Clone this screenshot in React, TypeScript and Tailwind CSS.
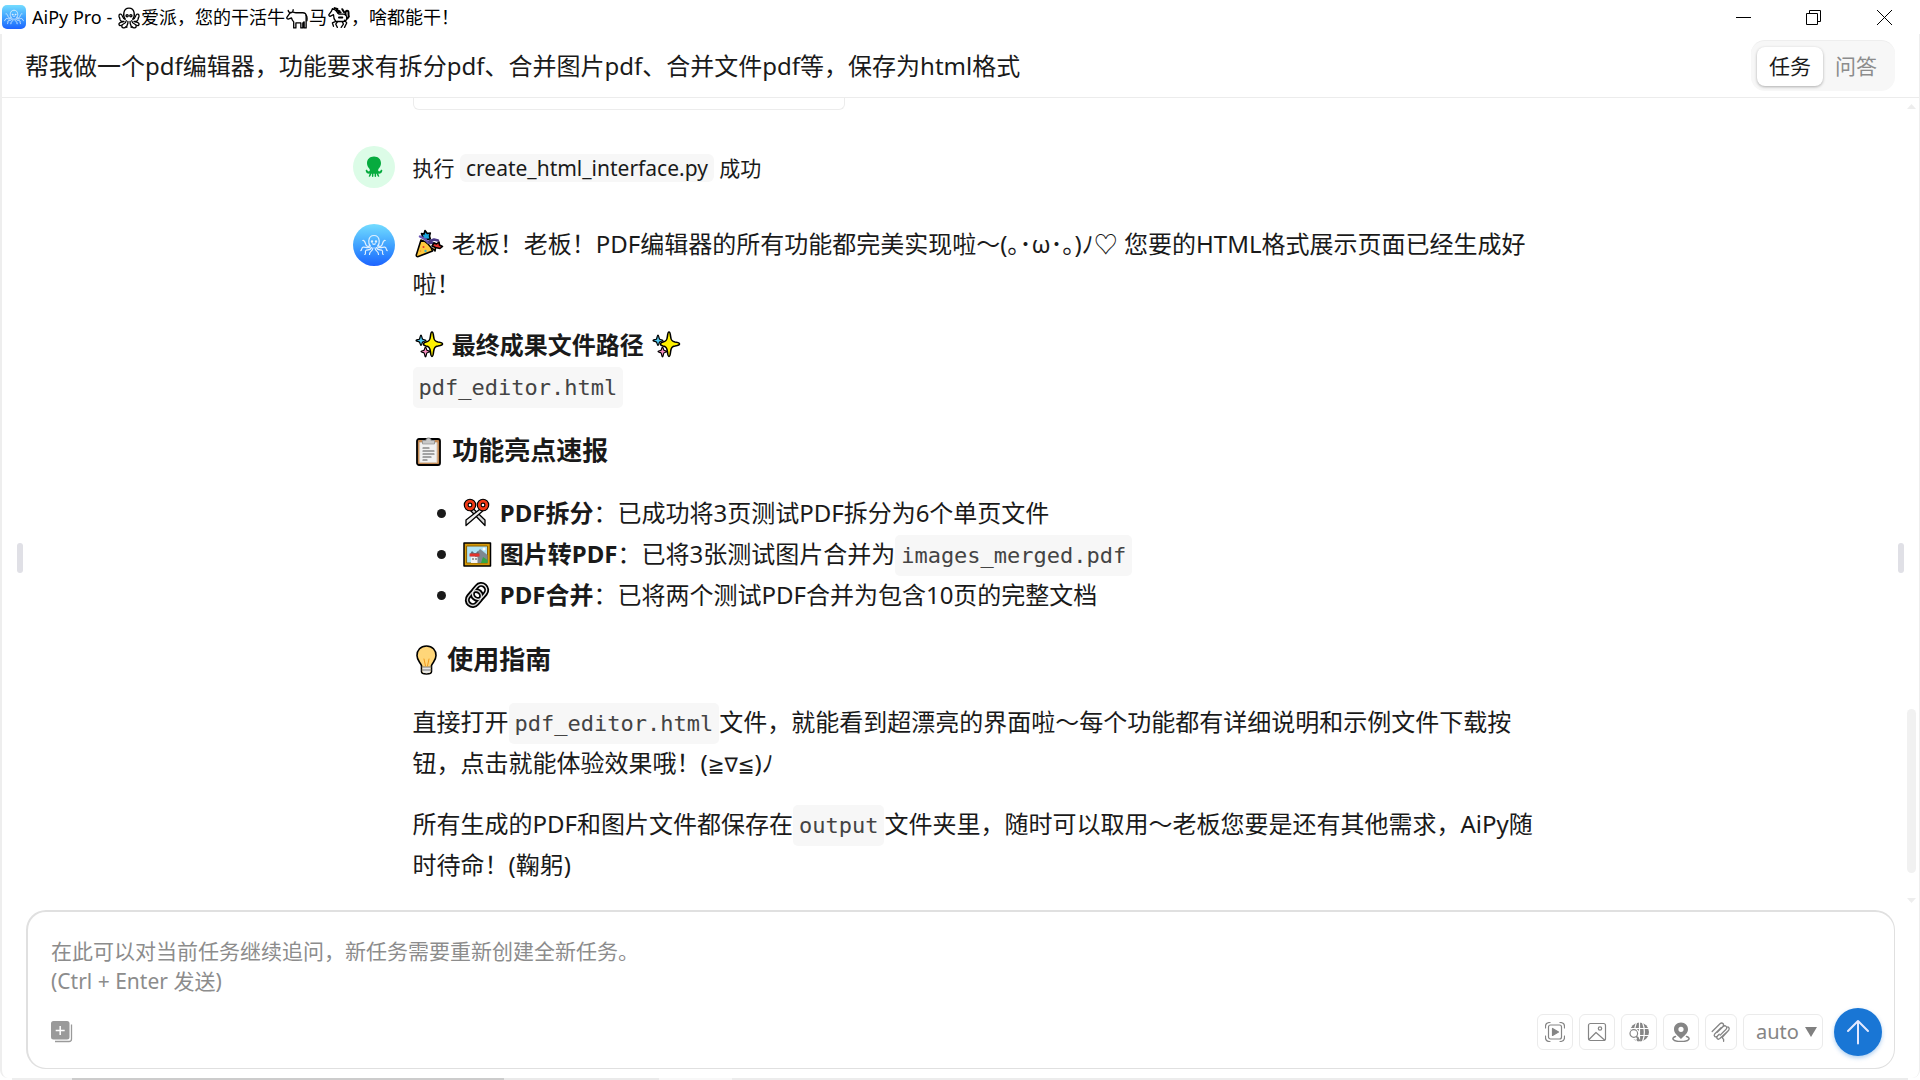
import React from 'react';

type Kids = { children?: React.ReactNode };

/* ---------- Logos ---------- */

function OctopusLine({ className }: { className: string }) {
  return (
    <svg viewBox="0 0 28 22" className={className} fill="none" stroke="#dff0ff" strokeWidth="1.2" strokeLinecap="round" aria-hidden="true">
      <path d="M10 11.5C8.6 10 8.6 8.500 8.800 6.500C9.200 3.400 11.200 1.500 14 1.500s4.800 1.900 5.200 5c.2 2 .2 3.500-1.200 5" />
      <circle cx="12" cy="7.500" r=".6" fill="#dff0ff" />
      <circle cx="16" cy="7.500" r=".6" fill="#dff0ff" />
      <path d="M12.600 9.800q1.400 1 2.800 0" />
      <path d="M10 11.500C8.500 13 6.500 12.500 5.800 10.500S4.500 6 2.800 6.500M18 11.500c1.500 1.500 3.500 1 4.200-1s1.300-4.500 3-4" />
      <path d="M10.500 12.800C8 15 5 12.800 3.200 13.200S1.500 17 .8 16.500M17.500 12.800c2.500 2.200 5.500 0 7.300.4s1.700 3.800 2.400 3.300" />
      <path d="M11.500 13.500C10.500 17 7 15 5.800 16.500S6.500 20 4.800 20.500M16.500 13.500c1 3.500 4.500 1.500 5.700 3s-.7 3.500 1 4" />
      <path d="M13 13.800c-.2 4.200-3.500 2.500-3.500 6.700M15 13.800c.2 4.200 3.500 2.500 3.500 6.700" />
    </svg>
  );
}

function OctopusSolid() {
  return (
    <svg viewBox="0 0 18 22" className="h-[22px] w-[18px]" fill="#07ab3f" aria-hidden="true">
      <path d="M9 .5C4.700.5 2 3.300 2 7.200c0 2.500 1.300 4.200 2.400 5.500.6.800.6 2.300-.3 2.600-.9.300-1.500-.2-1.800-1.100-.3-.8-1.800-.5-1.600.5.300 2 1.800 3.200 4 2.900-.2 1-.6 1.700-.9 2.300-.3.800 1 1.300 1.500.4.500-.800.8-1.600 1-2.500h.6v2.400c0 .9 1.500.9 1.500 0v-2.400h1.200v2.400c0 .9 1.500.9 1.500 0v-2.400h.6c.2.9.5 1.700 1 2.500.5.900 1.800.4 1.500-.4-.3-.6-.7-1.300-.9-2.300 2.200.3 3.700-.9 4-2.900.2-1-1.300-1.300-1.600-.5-.3.900-.9 1.400-1.800 1.100-.9-.3-.9-1.800-.3-2.600C14.700 11.400 16 9.700 16 7.200 16 3.300 13.300.5 9 .5z" />
    </svg>
  );
}

/* ---------- Outline animals of the window title ---------- */

function TitleGlyph({ children, label }: Kids & { label: string }) {
  return (
    <svg viewBox="0 0 20 20" role="img" aria-label={label} className="mx-px inline-block size-[22px] align-[-5px]" fill="none" stroke="#000" strokeWidth="1.200" strokeLinecap="round" strokeLinejoin="round">
      {children}
    </svg>
  );
}

const TitleOctopus = () => (
  <TitleGlyph label="章鱼">
    <path d="M6.500 11C4.500 8.500 4.300 1 10 1s5.500 7.500 3.500 10" />
    <circle cx="8.300" cy="8" r="1" />
    <circle cx="11.700" cy="8" r="1" />
    <path d="M6.500 11C4 11.500 4.500 7 2.600 6.500S.5 9 1.500 10M13.500 11c2.500.5 2-4 3.900-4.500s2.100 2.500 1.100 3.500" />
    <path d="M1.500 10c.2 3 2 3.500 4 3-2.500 1-4 .5-4.500 2s1 2.500 2 1.500M18.500 10c-.2 3-2 3.500-4 3 2.500 1 4 .5 4.500 2s-1 2.500-2 1.500" />
    <path d="M7.500 12.500C7 16 4 14.500 3.500 17s3 2.500 3.500 1M12.500 12.500c.5 3.500 3.500 2 4 4.500s-3 2.500-3.500 1M9 13c.5 3-1.500 3.500-1 5.500M11 13c-.5 3 1.500 3.500 1 5.500" />
  </TitleGlyph>
);

const TitleOx = () => (
  <TitleGlyph label="牛">
    <path d="M2 3c0 1.500 1 2 2 2M6.500 2.500C6.500 4 6 5 5 5L3.500 5.500.8 9.500c-.3 1 .7 1.800 1.700 1.300L5 10c.5 2 1.500 3 2 3.500V19h2v-4.500h4.500V19h1.800v-4.500l1.200-1V19h1.800V8c0-2-1-2.800-3-2.800H9C7.500 5.200 7 4.500 6 4.500" />
    <path d="M18.300 7.500c1 1 1 3 .7 5" />
  </TitleGlyph>
);

const TitleHorse = () => (
  <TitleGlyph label="马">
    <path d="M4 1.500 3 4 .8 7c-.2 1.300 1.200 1.800 2 1L5 7c0 3 .5 4.500 2 6l-3 1.500 1 3M9 13l-2 2.500 1.500 3M15 12l2 2.500-2 4M13 13.500l1 2-2 3M4 1.500l2 .8C8 3 8.500 6 10 6.500h4c2 0 3 1.500 3 3.500 0 1.500-1 3-3 3.200H7" />
    <path d="M6 1l2.500.8M8 3l2.500.8M9 5h2.500M13 2l1.500 2.500M16 7c-.5-2.500.5-4 2-3.500 1.500 1 0 3 1 5l-1.500 2M10 9.500h3" strokeWidth="1.800" />
  </TitleGlyph>
);

/* ---------- Colour pictographs in the answer ---------- */

function Emoji({ children, label, narrow }: Kids & { label: string; narrow?: boolean }) {
  return (
    <svg
      viewBox={narrow ? '0 0 28 30' : '0 0 33 30'}
      role="img"
      aria-label={label}
      className={narrow ? 'inline-block h-[30px] w-7 align-[-6px]' : 'inline-block h-[30px] w-[33px] align-[-6px]'}
      fill="none"
      stroke="#000"
      strokeWidth="1.600"
      strokeLinejoin="round"
      strokeLinecap="round"
    >
      {children}
    </svg>
  );
}

const Party = () => (
  <Emoji label="庆祝">
    <path d="M8 11 3.300 26c-.2 1.200.8 2 2 1.600L19.500 22C18 17 13 12 8 11z" fill="#ffc83d" />
    <path d="M8.500 4.500 11 5l1-3.500 2.300 3 3-.5-.8 3 .8 3-4 .5-3-1z" fill="#1ca6dd" />
    <path d="M7 7.500 10 9M12 10l3 3.500" stroke="#6a55b5" strokeWidth="2.500" />
    <path d="M16 12.500l5-2 4 1M17 14c2-.5 4 0 5 1" stroke="#4b3a86" strokeWidth="2.500" />
    <path d="M19 17l2-3 2.500 1 2.500-2 .5 3 3 1.500-2.500 2-4.500-1z" fill="#e3332c" />
    <path d="M19 19l3 3 .5-3" fill="#ffc83d" />
    <circle cx="10.500" cy="18" r="1" fill="#e3332c" stroke="none" />
    <circle cx="12.500" cy="22" r="1.200" fill="#3bb6c9" stroke="none" />
    <circle cx="7.500" cy="22" r=".8" fill="#f08a24" stroke="none" />
  </Emoji>
);

const Sparkles = () => (
  <Emoji label="闪光">
    <path d="M19 2c1 0 1.300 1.500 1.600 4.500.4 4 1.400 5 4.400 5.500 3 .4 4.500 1 4.500 2s-1.500 1.500-4.500 2c-3 .4-4 1.500-4.400 5.500-.3 3-.6 5-1.600 5s-1.300-2-1.600-5c-.4-4-1.400-5.100-4.400-5.500-1.500-.3-2.500-1-2.500-2s1-1.600 2.500-2c3-.5 4-1.500 4.400-5.500C17.700 3.500 18 2 19 2z" fill="#fff100" />
    <path d="M8 5c.8 0 .8 3.500 1.700 4.200s3.300.5 3.300 1.300-2.500.7-3.300 1.500S8.800 15.500 8 15.500 7.200 12.800 6.300 12 3 11.500 3 10.500s2.500-.6 3.300-1.300S7.200 5 8 5z" fill="#4fc7f0" strokeWidth="1.200" />
    <path d="M12.500 17c.8 0 .8 2.700 1.500 3.300s3 .5 3 1.200-2.300.7-3 1.400-.7 4.100-1.500 4.100-.8-3.500-1.500-4.100-3-.6-3-1.400 2.300-.6 3-1.200.7-3.300 1.500-3.300z" fill="#f78fc0" strokeWidth="1.200" />
  </Emoji>
);

const Clipboard = () => (
  <Emoji label="剪贴板">
    <rect x="4" y="3" width="23" height="26" rx="2" fill="#c58b55" strokeWidth="1.800" />
    <rect x="7" y="6.500" width="17" height="20" fill="#f2f2f2" stroke="#d9c8b5" strokeWidth="1" />
    <path d="M9.500 7.500v-3h3.500c0-3.500 5-3.500 5 0h3.500v3z" fill="#c9c9c9" stroke="#999" strokeWidth="1" />
    <path d="M10 12h6M10 15h11M10 18h11M10 21h8M10 24h4" stroke="#555" strokeWidth="1.200" />
  </Emoji>
);

const Scissors = () => (
  <Emoji label="剪刀">
    <path d="M8 11 24 27.500V22L11.500 10z" fill="#d6d6d6" strokeWidth="1.300" />
    <path d="M24 11 5 27.500V22L20.500 10z" fill="#ededed" strokeWidth="1.300" />
    <circle cx="9" cy="7" r="3.800" stroke="#000" strokeWidth="5" />
    <circle cx="22" cy="7" r="3.800" stroke="#000" strokeWidth="5" />
    <circle cx="9" cy="7" r="3.800" stroke="#f03a17" strokeWidth="2.700" />
    <circle cx="22" cy="7" r="3.800" stroke="#f03a17" strokeWidth="2.700" />
  </Emoji>
);

const Picture = () => (
  <Emoji label="图片">
    <rect x="3" y="4" width="26.500" height="23" fill="#d69a0a" strokeWidth="1.500" />
    <rect x="6" y="7" width="20.500" height="17" fill="#aee3f5" stroke="#8a6100" strokeWidth="1" />
    <path d="M14 24V16l5-6 7.500 6v8z" fill="#7d8891" stroke="none" />
    <path d="M20 24l2-6 4.500 3v3z" fill="#35a744" stroke="none" />
    <path d="M9 15l2-3 2 2h2l2-2 1 3z" fill="#5c6b76" stroke="none" />
    <rect x="8.500" y="14.500" width="10" height="3" fill="#e3332c" stroke="none" />
    <path d="M10 24v-6h6.500v6z" fill="#f4f4f4" stroke="none" />
    <circle cx="12" cy="20" r=".8" fill="#333" stroke="none" />
    <circle cx="15" cy="20" r=".8" fill="#333" stroke="none" />
    <circle cx="23" cy="10" r="1.500" fill="#fff" stroke="none" />
  </Emoji>
);

const Link = () => (
  <Emoji label="链接">
    <g transform="rotate(-50 16 15)">
      <rect x="4" y="9.500" width="16" height="11" rx="5.500" strokeWidth="5" />
      <rect x="12" y="9.500" width="16" height="11" rx="5.500" strokeWidth="5" />
      <rect x="4" y="9.500" width="16" height="11" rx="5.500" stroke="#d0d0d0" strokeWidth="1.400" />
      <rect x="12" y="9.500" width="16" height="11" rx="5.500" stroke="#e8e8e8" strokeWidth="1.400" />
    </g>
  </Emoji>
);

const Bulb = () => (
  <Emoji label="灯泡" narrow>
    <path d="M13.500 1C7.500 1 4 5.200 4 10.500c0 5 3.200 6.500 4.500 10v6c0 1.500 2 2.500 5 2.500s5-1 5-2.500v-6c1.300-3.500 4.500-5 4.500-10C23 5.200 19.500 1 13.500 1z" fill="#ffd679" />
    <path d="M9.500 22h8v4.500c0 1-1.500 1.700-4 1.700s-4-.7-4-1.700z" fill="#e8e8e8" stroke="none" />
    <path d="M9 22h9M9 25h9" strokeWidth="1" stroke="#777" />
    <path d="M11 14l1.500 7M16 14l-1.500 7" strokeWidth="1" stroke="#f09a1c" />
  </Emoji>
);

/* ---------- Text parts ---------- */

const Code = ({ children }: Kids) => (
  <code className="rounded-[5px] bg-[#f7f7f7] px-[6px] py-2 font-['DejaVu_Sans_Mono','Liberation_Mono',monospace] text-[22px] leading-none text-[#444]">
    {children}
  </code>
);

const Heading = ({ children }: Kids) => (
  <h3 className="mt-[26px] mb-6 text-[26px] leading-9 font-bold">{children}</h3>
);

/* ---------- Page parts ---------- */

function TitleBar() {
  return (
    <div className="flex h-[34px] shrink-0 items-center justify-between text-black">
      <div className="flex items-center gap-[6px] pl-[2px]">
        <span className="flex size-6 items-center justify-center rounded-[5px] bg-linear-to-b from-[#74dcff] to-[#1f62ff]">
          <OctopusLine className="h-4 w-5" />
        </span>
        <span className="text-[18px] leading-6 whitespace-nowrap">
          AiPy Pro - <TitleOctopus />爱派，您的干活牛<TitleOx />马<TitleHorse />，啥都能干！
        </span>
      </div>
      <div className="flex items-center">
        <button aria-label="最小化" className="flex h-[34px] w-[70px] items-center justify-center">
          <svg viewBox="0 0 15 15" className="size-[15px]" stroke="#000"><path d="M0 7.500h15" /></svg>
        </button>
        <button aria-label="还原" className="flex h-[34px] w-[70px] items-center justify-center">
          <svg viewBox="0 0 15 15" className="size-[15px]" fill="none" stroke="#000"><path d="M.5 3.500h11v11H.5zM3.500 3.500v-3h11v11h-3" /></svg>
        </button>
        <button aria-label="关闭" className="flex h-[34px] w-[72px] items-center justify-center">
          <svg viewBox="0 0 15 15" className="size-[15px]" stroke="#000"><path d="M0 0l15 15M15 0 0 15" /></svg>
        </button>
      </div>
    </div>
  );
}

function TaskHeader() {
  return (
    <header className="flex h-16 shrink-0 items-center justify-between border-b border-[#ececec] pr-6 pl-[23px]">
      <h1 className="text-[24px] leading-9">帮我做一个pdf编辑器，功能要求有拆分pdf、合并图片pdf、合并文件pdf等，保存为html格式</h1>
      <div className="flex h-[51px] items-center rounded-[14px] border-t border-[#eee] bg-[#f7f7f7] px-[6px]">
        <button className="h-[39px] w-[66px] rounded-lg bg-white text-[21px] leading-none shadow-[0_1px_3px_rgba(0,0,0,0.3)]">任务</button>
        <button className="h-[39px] w-[66px] rounded-lg text-[21px] leading-none text-[#8c8c8c]">问答</button>
      </div>
    </header>
  );
}

function Conversation() {
  return (
    <main className="relative min-h-0 flex-1 overflow-hidden">
      <div className="mx-auto flex max-w-[1216px] flex-col">
        <div className="ml-[60px] h-3 w-[432px] rounded-b-md border border-t-0 border-[#ececec]" />

        <div className="mt-9 flex gap-[18px]">
          <span className="flex size-[42px] shrink-0 items-center justify-center rounded-full bg-[#dcfce7]">
            <OctopusSolid />
          </span>
          <p className="text-[21px] leading-[44px]">
            执行{' '}
            <code className="rounded-md bg-[#f7f7f7] px-[6px] font-['Noto_Sans','Noto_Sans_CJK_SC',sans-serif] text-[21px]">create_html_interface.py</code>{' '}
            成功
          </p>
        </div>

        <div className="mt-[34px] flex gap-[18px]">
          <span className="flex size-[42px] shrink-0 items-center justify-center rounded-full bg-linear-to-b from-[#74dcff] to-[#1f62ff]">
            <OctopusLine className="h-[22px] w-7" />
          </span>
          <article className="min-w-0 flex-1 pr-5 text-[24px] leading-[41px]">
            <p className="leading-10">
              <Party /> 老板！老板！PDF编辑器的所有功能都完美实现啦～(｡･ω･｡)ﾉ♡ 您要的HTML格式展示页面已经生成好啦！
            </p>
            <p className="mt-5">
              <strong className="font-bold"><Sparkles /> 最终成果文件路径 <Sparkles /></strong>
              <br />
              <Code>pdf_editor.html</Code>
            </p>
            <Heading><Clipboard /> 功能亮点速报</Heading>
            <ul className="list-disc pl-12">
              <li><Scissors /> <strong className="font-bold">PDF拆分</strong>：已成功将3页测试PDF拆分为6个单页文件</li>
              <li><Picture /> <strong className="font-bold">图片转PDF</strong>：已将3张测试图片合并为<Code>images_merged.pdf</Code></li>
              <li><Link /> <strong className="font-bold">PDF合并</strong>：已将两个测试PDF合并为包含10页的完整文档</li>
            </ul>
            <Heading><Bulb /> 使用指南</Heading>
            <p>
              直接打开<Code>pdf_editor.html</Code>文件，就能看到超漂亮的界面啦～每个功能都有详细说明和示例文件下载按钮，点击就能体验效果哦！(<span className="font-['DejaVu_Sans',sans-serif] text-[20px] leading-none">≧∇≦</span>)ﾉ
            </p>
            <p className="mt-5">
              所有生成的PDF和图片文件都保存在<Code>output</Code>文件夹里，随时可以取用～老板您要是还有其他需求，AiPy随时待命！(鞠躬)
            </p>
          </article>
        </div>
      </div>

      {/* Resize grips and scroll bar lie over the conversation */}
      <div className="absolute top-[445px] left-[15px] h-[30px] w-[6px] rounded-full bg-[#e0e0e6]" />
      <div className="absolute top-[445px] right-[15px] h-[30px] w-[6px] rounded-full bg-[#e0e0e6]" />
      <div className="absolute inset-y-0 right-[3px] w-[9px]">
        <svg viewBox="0 0 9 5" className="absolute top-[6px] h-[5px] w-[9px]" fill="#ededed"><path d="M0 5 4.500 0 9 5z" /></svg>
        <div className="absolute top-[611px] h-[164px] w-full rounded-full bg-[#f1f1f1]" />
        <svg viewBox="0 0 9 5" className="absolute bottom-[7px] h-[5px] w-[9px]" fill="#ededed"><path d="M0 0 4.500 5 9 0z" /></svg>
      </div>
    </main>
  );
}

function ToolButton({ label, children, slim }: Kids & { label: string; slim?: boolean }) {
  return (
    <button
      type="button"
      aria-label={label}
      className={
        slim
          ? 'flex h-9 w-8 items-center justify-center rounded-md border border-[#ebebeb]'
          : 'flex size-9 items-center justify-center rounded-md border border-[#ebebeb]'
      }
    >
      <svg viewBox="0 0 20 20" className="size-5" fill="none" stroke="#858585" strokeWidth="1.200" strokeLinecap="round" strokeLinejoin="round">
        {children}
      </svg>
    </button>
  );
}

function Composer() {
  return (
    <form className="mr-6 ml-6 flex h-[159px] shrink-0 flex-col rounded-[20px] border-2 border-r border-b border-[#e0e0e0] pr-3 pl-[23px]">
      <textarea
        aria-label="追问"
        className="mt-6 h-[66px] w-full resize-none bg-transparent text-[21px] leading-[30px] outline-none placeholder:text-[#8c8c8c]"
        placeholder={'在此可以对当前任务继续追问，新任务需要重新创建全新任务。\n(Ctrl + Enter 发送)'}
      />
      <div className="mt-[6px] flex items-center justify-between">
        <button aria-label="添加附件" type="button" className="flex size-[22px]">
          <svg viewBox="0 0 22 22" className="size-[22px]" fill="none">
            <rect x="0" y="0" width="18.500" height="18.500" rx="2.500" fill="#9a9a9a" />
            <path d="M9.200 5v9M4.700 9.500h9" stroke="#fff" strokeWidth="1.500" />
            <path d="M20.500 3.500V18c0 1.500-1 2.500-2.500 2.500H4" stroke="#9a9a9a" strokeWidth="1.300" />
          </svg>
        </button>
        <div className="flex items-center gap-[6px]">
          <ToolButton label="视频">
            <rect x="3.500" y="3" width="13" height="14" rx="2" />
            <path d="M7.500 6.500v7l6-3.500z" fill="#858585" />
            <path d="M.5 6V4.500C.5 2 2 .5 5 .5M.5 14v1.500c0 2.500 1.500 4 4.500 4M19.500 6V4.500c0-2.500-1.500-4-4.500-4M19.500 14v1.500c0 2.500-1.500 4-4.500 4" />
          </ToolButton>
          <ToolButton label="图片">
            <rect x="1.500" y="1.500" width="17" height="17" rx="2" />
            <circle cx="13" cy="6.500" r="1.700" />
            <path d="M2 17.500 9 10.500l8.500 7.500" />
          </ToolButton>
          <ToolButton label="联网搜索">
            <circle cx="10.500" cy="10" r="9.500" fill="#858585" stroke="none" />
            <path d="M10.500 0v20M1 6.500h19M1 13.500h19M7.500.5C5 6 5 14 7.500 19.500M13.500.5c2.500 5.500 2.500 13.500 0 19" stroke="#fff" />
            <circle cx="5" cy="12" r="5.700" fill="#fff" stroke="none" />
            <circle cx="4.800" cy="11.500" r="3.800" />
            <path d="m7.600 14.500 2.800 4" strokeWidth="1.600" />
          </ToolButton>
          <ToolButton label="位置">
            <path d="M10 .5C5.800.5 3 3.500 3 7.200c0 4 3.500 6.300 7 9.800 3.500-3.500 7-5.800 7-9.800C17 3.500 14.200.5 10 .5zm0 4.200a2.600 2.600 0 1 1 0 5.200 2.600 2.600 0 0 1 0-5.200z" fill="#858585" fillRule="evenodd" stroke="none" />
            <path d="M4.500 14.500C.5 15.500.5 19.500 10 19.500s9.500-4 5.500-5" strokeWidth="1.500" />
          </ToolButton>
          <ToolButton label="MCP 工具" slim>
            <path d="M1.200 9.500 9 1.700c2.200-1.800 4.600.6 2.900 2.700L6 10.300M6.200 10.200l6-5.700c2.200-1.800 4.600.6 2.900 2.700l-5.900 5.900M3.700 12 10 5.700M9.200 13.100l4.100-4.200M3.700 12c-1.400 2 .8 3.800 2.500 2.300l2-2M6.300 14.300c-1.400 2 .8 3.800 2.500 2.300L17 9c1.800-1.800 1.300-3.600-.2-4.200M17 9l-5 5.500c-1.200 1.300-.4 2 .6 2.800v2" strokeWidth="1.300" />
          </ToolButton>
          <div className="relative">
            <select aria-label="模式" className="h-9 w-20 appearance-none rounded-md border border-[#ebebeb] bg-white pl-3 text-[20px] leading-none text-[#858585]">
              <option>auto</option>
            </select>
            <svg viewBox="0 0 12 10" className="pointer-events-none absolute top-[13px] right-[6px] h-[10px] w-3" fill="#808080"><path d="M0 0h12L6 10z" /></svg>
          </div>
          <button type="button" aria-label="发送" className="ml-[5px] flex size-12 items-center justify-center rounded-full bg-[#1976d5] shadow-[0_2px_4px_rgba(25,118,213,0.35)]">
            <svg viewBox="0 0 24 26" className="h-[26px] w-6" fill="none" stroke="#e4e9ff" strokeWidth="2" strokeLinecap="round" strokeLinejoin="round">
              <path d="M12 24.500V2M2 12 12 2l10 10" />
            </svg>
          </button>
        </div>
      </div>
    </form>
  );
}

export default function App() {
  return (
    <div className="flex h-screen flex-col bg-white font-['Noto_Sans','Noto_Sans_CJK_SC',sans-serif] text-[#1a1a1a]" lang="zh-CN">
      <TitleBar />
      <div className="flex min-h-0 flex-1 flex-col rounded-b-lg border-r border-l-2 border-[#eee] pb-[9px]">
        <TaskHeader />
        <Conversation />
        <Composer />
      </div>
      <div className="flex h-[2px] shrink-0 px-3">
        <div className="w-[60px] bg-[#eee]" />
        <div className="w-[432px] bg-[#ccc]" />
        <div className="w-[155px] bg-[#eaeaea]" />
        <div className="w-[73px] bg-[#f8f8f8]" />
        <div className="flex-1 bg-[#ececec]" />
      </div>
    </div>
  );
}
